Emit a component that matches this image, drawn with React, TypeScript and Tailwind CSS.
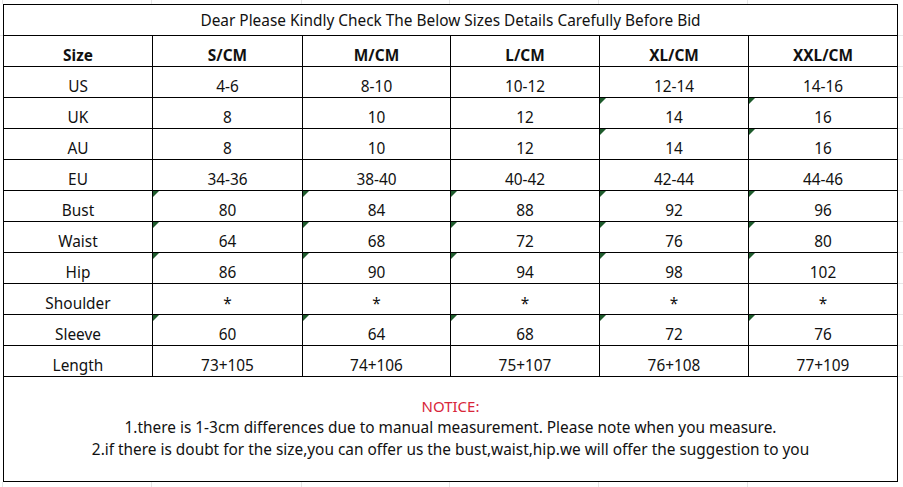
import React from 'react';

const cols = ['S/CM', 'M/CM', 'L/CM', 'XL/CM', 'XXL/CM'];
const widths = ['w-[149px]', 'w-[150px]', 'w-[148px]', 'w-[149px]', 'w-[149px]', 'w-[149px]'];

// flag = which data cells show the excel green "number stored as text" corner
const rows: { label: string; values: string[]; flag: boolean[] }[] = [
  { label: 'US', values: ['4-6', '8-10', '10-12', '12-14', '14-16'], flag: [false, false, false, false, false] },
  { label: 'UK', values: ['8', '10', '12', '14', '16'], flag: [false, false, false, true, true] },
  { label: 'AU', values: ['8', '10', '12', '14', '16'], flag: [false, false, false, true, true] },
  { label: 'EU', values: ['34-36', '38-40', '40-42', '42-44', '44-46'], flag: [false, false, false, false, false] },
  { label: 'Bust', values: ['80', '84', '88', '92', '96'], flag: [true, true, true, true, true] },
  { label: 'Waist', values: ['64', '68', '72', '76', '80'], flag: [true, true, true, true, true] },
  { label: 'Hip', values: ['86', '90', '94', '98', '102'], flag: [true, true, true, true, true] },
  { label: 'Shoulder', values: ['*', '*', '*', '*', '*'], flag: [false, false, false, false, false] },
  { label: 'Sleeve', values: ['60', '64', '68', '72', '76'], flag: [true, true, true, true, true] },
  { label: 'Length', values: ['73+105', '74+106', '75+107', '76+108', '77+109'], flag: [false, false, false, false, false] },
];

const sans = { fontFamily: '"Noto Sans", "Open Sans", sans-serif' };

const Corner = () => (
  <span className="absolute left-0 top-0 w-0 h-0 border-t-[6px] border-r-[6px] border-t-[#1e5b2c] border-r-transparent" />
);

const cell = 'h-[31px] border-r border-b border-black flex items-end justify-center pb-[3px] text-[15.4px] leading-none';

const App = () => {
  return (
    <div className="w-[903px] h-[487px] bg-white text-[#111] overflow-hidden" style={sans}>
      {/* faint excel grid above the table */}
      <div className="flex h-[4px] pl-[2px]">
        {widths.map((w, i) => (
          <div key={i} className={`${w} border-l border-[#e6e6e6] h-full`} />
        ))}
      </div>

      <div className="flex">
        <div className="w-[3px] flex flex-col">
          <div className="h-[32px] border-b border-[#e6e6e6]" />
        </div>

        <div className="w-[895px] border-l border-t border-black">
          {/* title */}
          <div className="h-[31px] border-r border-b border-black flex items-center justify-center text-[15.4px] pt-[1px]">
            Dear Please Kindly Check The Below Sizes Details Carefully Before Bid
          </div>

          {/* header */}
          <div className="flex">
            <div className={`${widths[0]} ${cell} font-bold`}>Size</div>
            {cols.map((c, i) => (
              <div key={c} className={`${widths[i + 1]} ${cell} font-bold`}>
                {c}
              </div>
            ))}
          </div>

          {rows.map((r) => (
            <div key={r.label} className="flex">
              <div className={`${widths[0]} ${cell}`}>{r.label}</div>
              {r.values.map((v, i) => (
                <div key={i} className={`${widths[i + 1]} ${cell} relative`}>
                  {r.flag[i] && <Corner />}
                  <span>{v}</span>
                </div>
              ))}
            </div>
          ))}

          {/* notice */}
          <div className="h-[105px] border-r border-b border-black flex flex-col items-center justify-center text-[15.4px] leading-[22px] pb-[2px]">
            <div className="text-[#d8263a] text-[15px]">NOTICE:</div>
            <div>1.there is 1-3cm differences due to manual measurement. Please note when you measure.</div>
            <div>2.if there is doubt for the size,you can offer us the bust,waist,hip.we will offer the suggestion to you</div>
          </div>
        </div>

        {/* faint excel grid right of the table */}
        <div className="flex-1 flex flex-col">
          <div className="h-[32px] border-b border-[#e6e6e6]" />
          {Array.from({ length: 11 }).map((_, i) => (
            <div key={i} className="h-[31px] border-b border-[#e6e6e6]" />
          ))}
        </div>
      </div>

      {/* faint excel grid below the table */}
      <div className="flex h-[5px] pl-[2px]">
        {widths.map((w, i) => (
          <div key={i} className={`${w} border-l border-[#e6e6e6] h-full`} />
        ))}
      </div>
    </div>
  );
};

export default App;
